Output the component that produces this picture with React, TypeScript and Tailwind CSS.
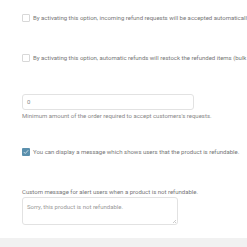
export default function App() {
  return (
    <div
      className="w-[247px] h-[247px] overflow-hidden bg-white flex flex-col"
      style={{ fontFamily: "Roboto, 'Liberation Sans', sans-serif" }}
    >
      <div className="flex-1 pl-[22px] pt-[14px] text-[6px] leading-[8px] text-[#777] whitespace-nowrap overflow-hidden">
        {/* Auto accept */}
        <div className="flex items-center gap-[3px] h-[8px]">
          <span className="w-[8px] h-[8px] shrink-0 rounded-[1px] border border-[#d8d8d8] bg-white" />
          <span>By activating this option, incoming refund requests will be accepted automatically.</span>
        </div>

        {/* Restock */}
        <div className="mt-[32px] flex items-center gap-[3px] h-[8px]">
          <span className="w-[8px] h-[8px] shrink-0 rounded-[1px] border border-[#d8d8d8] bg-white" />
          <span>By activating this option, automatic refunds will restock the refunded items (bulk actions).</span>
        </div>

        {/* Minimum amount */}
        <div className="mt-[32px] w-[172px] h-[16px] rounded-[3px] border border-[#e2e2e2] flex items-center px-[4px] text-[#888]">
          0
        </div>
        <p className="mt-[2px] h-[8px] text-[#888]">
          Minimum amount of the order required to accept customers's requests.
        </p>

        {/* Show message */}
        <div className="mt-[28px] flex items-center gap-[3px] h-[8px]">
          <span className="w-[8px] h-[8px] shrink-0 rounded-[1px] bg-[#5b90ad] flex items-center justify-center">
            <svg width="6" height="6" viewBox="0 0 12 12" fill="none">
              <path d="M2 6.5l2.5 2.5L10 3" stroke="#cfe0ea" strokeWidth="1.8" strokeLinecap="round" strokeLinejoin="round" />
            </svg>
          </span>
          <span>You can display a message which shows users that the product is refundable.</span>
        </div>

        {/* Custom message */}
        <p className="mt-[32px] h-[8px]">Custom message for alert users when a product is not refundable.</p>
        <div className="mt-[1px] relative w-[156px] h-[28px] rounded-[3px] border border-[#e2e2e2] px-[4px] pt-[5px] text-[#999]">
          Sorry, this product is not refundable.
          <svg className="absolute right-[1px] bottom-[1px]" width="4" height="4" viewBox="0 0 4 4">
            <path d="M4 1L1 4M4 3L3 4" stroke="#aaa" strokeWidth="0.6" />
          </svg>
        </div>
      </div>
      <div className="h-[9px] bg-[#f1f1f1]" />
    </div>
  );
}
